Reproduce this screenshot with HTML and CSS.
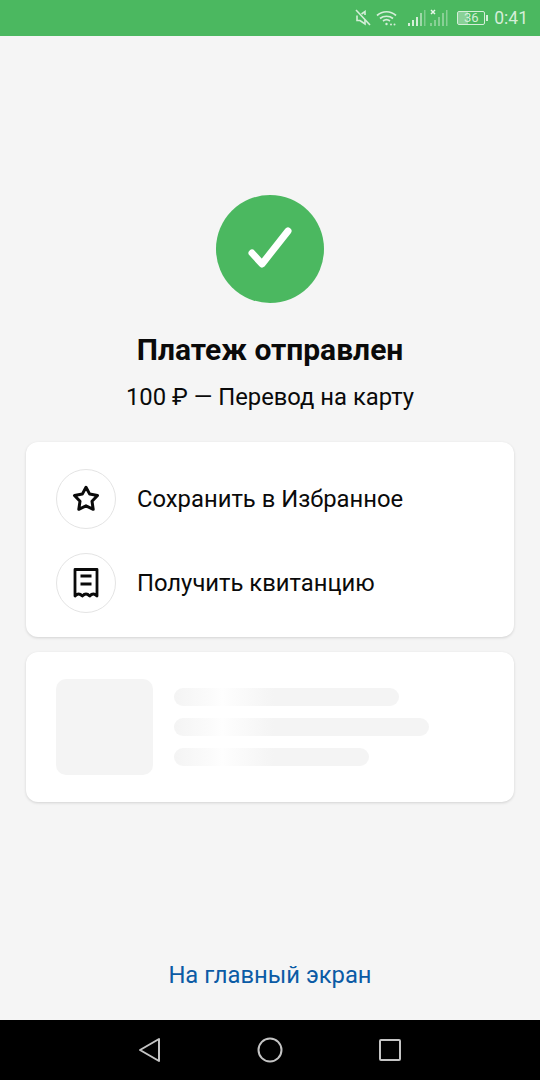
FILE: index.html
```html
<!DOCTYPE html>
<html lang="ru">
<head>
    <meta charset="UTF-8">
    <meta name="viewport" content="width=device-width, initial-scale=1.0">
    <title>Платеж отправлен</title>
    <link rel="stylesheet" href="styles.css">
</head>
<body>

<div class="status-bar">
    <!-- muted speaker -->
    <svg class="st-icon" width="18" height="18" viewBox="0 0 18 18" fill="none" stroke="#d5eed9" stroke-width="1.6">
        <path d="M2 1l14 15"/>
        <path d="M3 6.500v5h3l5 3.500v-4M11 6V2.500L7.500 5"/>
    </svg>
    <!-- wifi -->
    <svg class="st-icon wifi" width="22" height="18" viewBox="0 0 22 18" fill="none" stroke="#d5eed9" stroke-width="1.700">
        <path d="M1 6.500c5.500-5 13.500-5 19 0"/>
        <path d="M4 9.500c3.500-3 9.500-3 13 0"/>
        <path d="M7 12c2-1.500 5-1.500 7 0"/>
        <circle cx="10.500" cy="15" r="1.200" fill="#d5eed9" stroke="none"/>
        <circle cx="15" cy="15.500" r="1" fill="#d5eed9" stroke="none"/>
        <circle cx="18.500" cy="15.500" r="1" fill="#d5eed9" stroke="none"/>
    </svg>
    <!-- sim 1 -->
    <svg class="st-icon sim-one" width="18" height="18" viewBox="0 0 18 18" fill="#d5eed9">
        <rect x="0" y="14" width="2" height="3"/>
        <rect x="4" y="11" width="2" height="6"/>
        <rect x="8" y="8" width="2" height="9"/>
        <rect x="12" y="4" width="2" height="13" opacity="0.6"/>
        <rect x="16" y="1" width="1.500" height="16" opacity="0.4"/>
    </svg>
    <!-- sim 2 -->
    <svg class="st-icon sim-two" width="18" height="18" viewBox="0 0 18 18" fill="#d5eed9">
        <path d="M1 1l4 4M5 1L1 5" stroke="#e8f6ea" stroke-width="1.500"/>
        <g opacity="0.45">
            <rect x="0" y="14" width="2" height="3"/>
            <rect x="4" y="11" width="2" height="6"/>
            <rect x="8" y="8" width="2" height="9"/>
            <rect x="12" y="4" width="2" height="13"/>
            <rect x="16" y="1" width="1.500" height="16"/>
        </g>
    </svg>
    <div class="battery">
        <div class="battery-body">
            <div class="battery-fill"></div>
            <span class="battery-num">36</span>
        </div>
        <div class="battery-tip"></div>
    </div>
    <span class="clock">0:41</span>
</div>

<main class="content">
    <div class="check-circle">
        <svg width="48" height="48" viewBox="0 0 48 48" fill="none" stroke="#fff" stroke-width="7" stroke-linecap="round" stroke-linejoin="round">
            <path d="M6 28l10 11L42 6"/>
        </svg>
    </div>
    <h1 class="title">Платеж отправлен</h1>
    <p class="subtitle">100 ₽ — Перевод на карту</p>

    <section class="card actions">
        <div class="action">
            <div class="action-icon">
                <svg width="30" height="30" viewBox="0 0 30 30" fill="none" stroke="#0a0a0a" stroke-width="3" stroke-linejoin="round">
                    <path d="M15 3.300l3.700 6.800 7.800 1.400-5.500 5.800 1.200 8-7.200-3.500-7.200 3.500 1.200-8-5.500-5.800 7.800-1.400z"/>
                </svg>
            </div>
            <span class="action-label">Сохранить в Избранное</span>
        </div>
        <div class="action">
            <div class="action-icon">
                <svg width="30" height="30" viewBox="0 0 30 30" fill="none" stroke="#0a0a0a" stroke-width="2.800">
                    <path d="M4 28V1.500h22V28q-3.700-4-7.300 0-3.700-4-7.400 0-3.700-4-7.300 0z" stroke-linejoin="round"/>
                    <path d="M9.500 8h11M9.500 16h11"/>
                </svg>
            </div>
            <span class="action-label">Получить квитанцию</span>
        </div>
    </section>

    <section class="card promo">
        <div class="promo-thumb"></div>
        <div class="promo-lines">
            <div class="promo-line line-a"></div>
            <div class="promo-line line-b"></div>
            <div class="promo-line line-c"></div>
        </div>
    </section>

    <a class="home-link" href="#">На главный экран</a>
</main>

<nav class="nav-bar">
    <svg width="24" height="26" viewBox="0 0 24 26" fill="none" stroke="#c4c4c4" stroke-width="2" stroke-linejoin="round">
        <path d="M21 2v22L2 13z"/>
    </svg>
    <svg width="26" height="26" viewBox="0 0 26 26" fill="none" stroke="#c4c4c4" stroke-width="2">
        <circle cx="13" cy="13" r="11.500"/>
    </svg>
    <svg width="24" height="24" viewBox="0 0 24 24" fill="none" stroke="#c4c4c4" stroke-width="2" stroke-linejoin="round">
        <rect x="2" y="2" width="20" height="20" rx="1"/>
    </svg>
</nav>

</body>
</html>
```

FILE: styles.css
```css
body {
    font-family: 'Roboto', sans-serif;
    margin: 0;
    padding: 0;
    width: 540px;
    height: 1080px;
    display: flex;
    flex-direction: column;
    overflow: hidden;
    background-color: #f5f5f5;
    color: #0a0a0a;
}
/* Status bar */
.status-bar {
    height: 36px;
    background: #4bb860;
    display: flex;
    align-items: center;
    justify-content: flex-end;
    padding-right: 12px;
    color: #d5eed9;
}
.st-icon {
    display: block;
}
.wifi {
    margin-left: 4px;
}
.sim-one {
    margin-left: 10px;
}
.sim-two {
    margin-left: 4px;
}
.battery {
    display: flex;
    align-items: center;
    margin-left: 9px;
}
.battery-body {
    position: relative;
    width: 26px;
    height: 12px;
    border: 1px solid #d5eed9;
    border-radius: 2px;
    overflow: hidden;
}
.battery-fill {
    width: 36%;
    height: 100%;
    background: rgba(255, 255, 255, 0.35);
}
.battery-num {
    position: absolute;
    left: 0;
    right: 0;
    top: -1px;
    text-align: center;
    font-size: 13px;
    line-height: 14px;
}
.battery-tip {
    width: 2px;
    height: 6px;
    margin-left: 1px;
    background: #d5eed9;
}
.clock {
    margin-left: 6px;
    font-size: 17.5px;
}
/* Main column */
.content {
    flex: 1;
    display: flex;
    flex-direction: column;
    align-items: center;
    padding: 159px 26px 0;
}
.check-circle {
    width: 108px;
    height: 108px;
    border-radius: 50%;
    background: #4bb860;
    display: flex;
    align-items: center;
    justify-content: center;
}
.title {
    margin: 29px 0 0;
    font-size: 30px;
    line-height: 36px;
    font-weight: 700;
}
.subtitle {
    margin: 14px 0 0;
    font-size: 23.8px;
    line-height: 30px;
}
.card {
    width: 100%;
    box-sizing: border-box;
    background: #fff;
    border-radius: 12px;
    box-shadow: 0 1px 3px rgba(0, 0, 0, 0.14);
}
.actions {
    margin-top: 30px;
    height: 195px;
    padding: 27px 30px 0;
    display: flex;
    flex-direction: column;
    gap: 24px;
}
.action {
    display: flex;
    align-items: center;
}
.action-icon {
    width: 58px;
    height: 58px;
    border: 1px solid #e4e4e4;
    border-radius: 50%;
    display: flex;
    align-items: center;
    justify-content: center;
}
.action-label {
    margin-left: 21px;
    font-size: 23.8px;
}
.promo {
    margin-top: 15px;
    height: 150px;
    padding: 27px 30px 0;
    display: flex;
}
.promo-thumb {
    width: 97px;
    height: 96px;
    background: #f4f4f4;
    border-radius: 10px;
}
.promo-lines {
    margin-left: 21px;
    padding-top: 9px;
    display: flex;
    flex-direction: column;
    gap: 12px;
}
.promo-line {
    height: 18px;
    border-radius: 9px;
    background: linear-gradient(90deg, #f4f4f4 0, #fbfbfb 36px, #fefefe 48px, #fbfbfb 62px, #f4f4f4 100px);
}
.line-a {
    width: 225px;
}
.line-b {
    width: 255px;
}
.line-c {
    width: 195px;
}
.home-link {
    margin-top: auto;
    margin-bottom: 30px;
    font-size: 23.8px;
    line-height: 30px;
    color: #0b5ba5;
    text-decoration: none;
}
/* Nav bar */
.nav-bar {
    height: 60px;
    background: #000;
    display: flex;
    align-items: center;
    justify-content: center;
    gap: 95px;
}
```
